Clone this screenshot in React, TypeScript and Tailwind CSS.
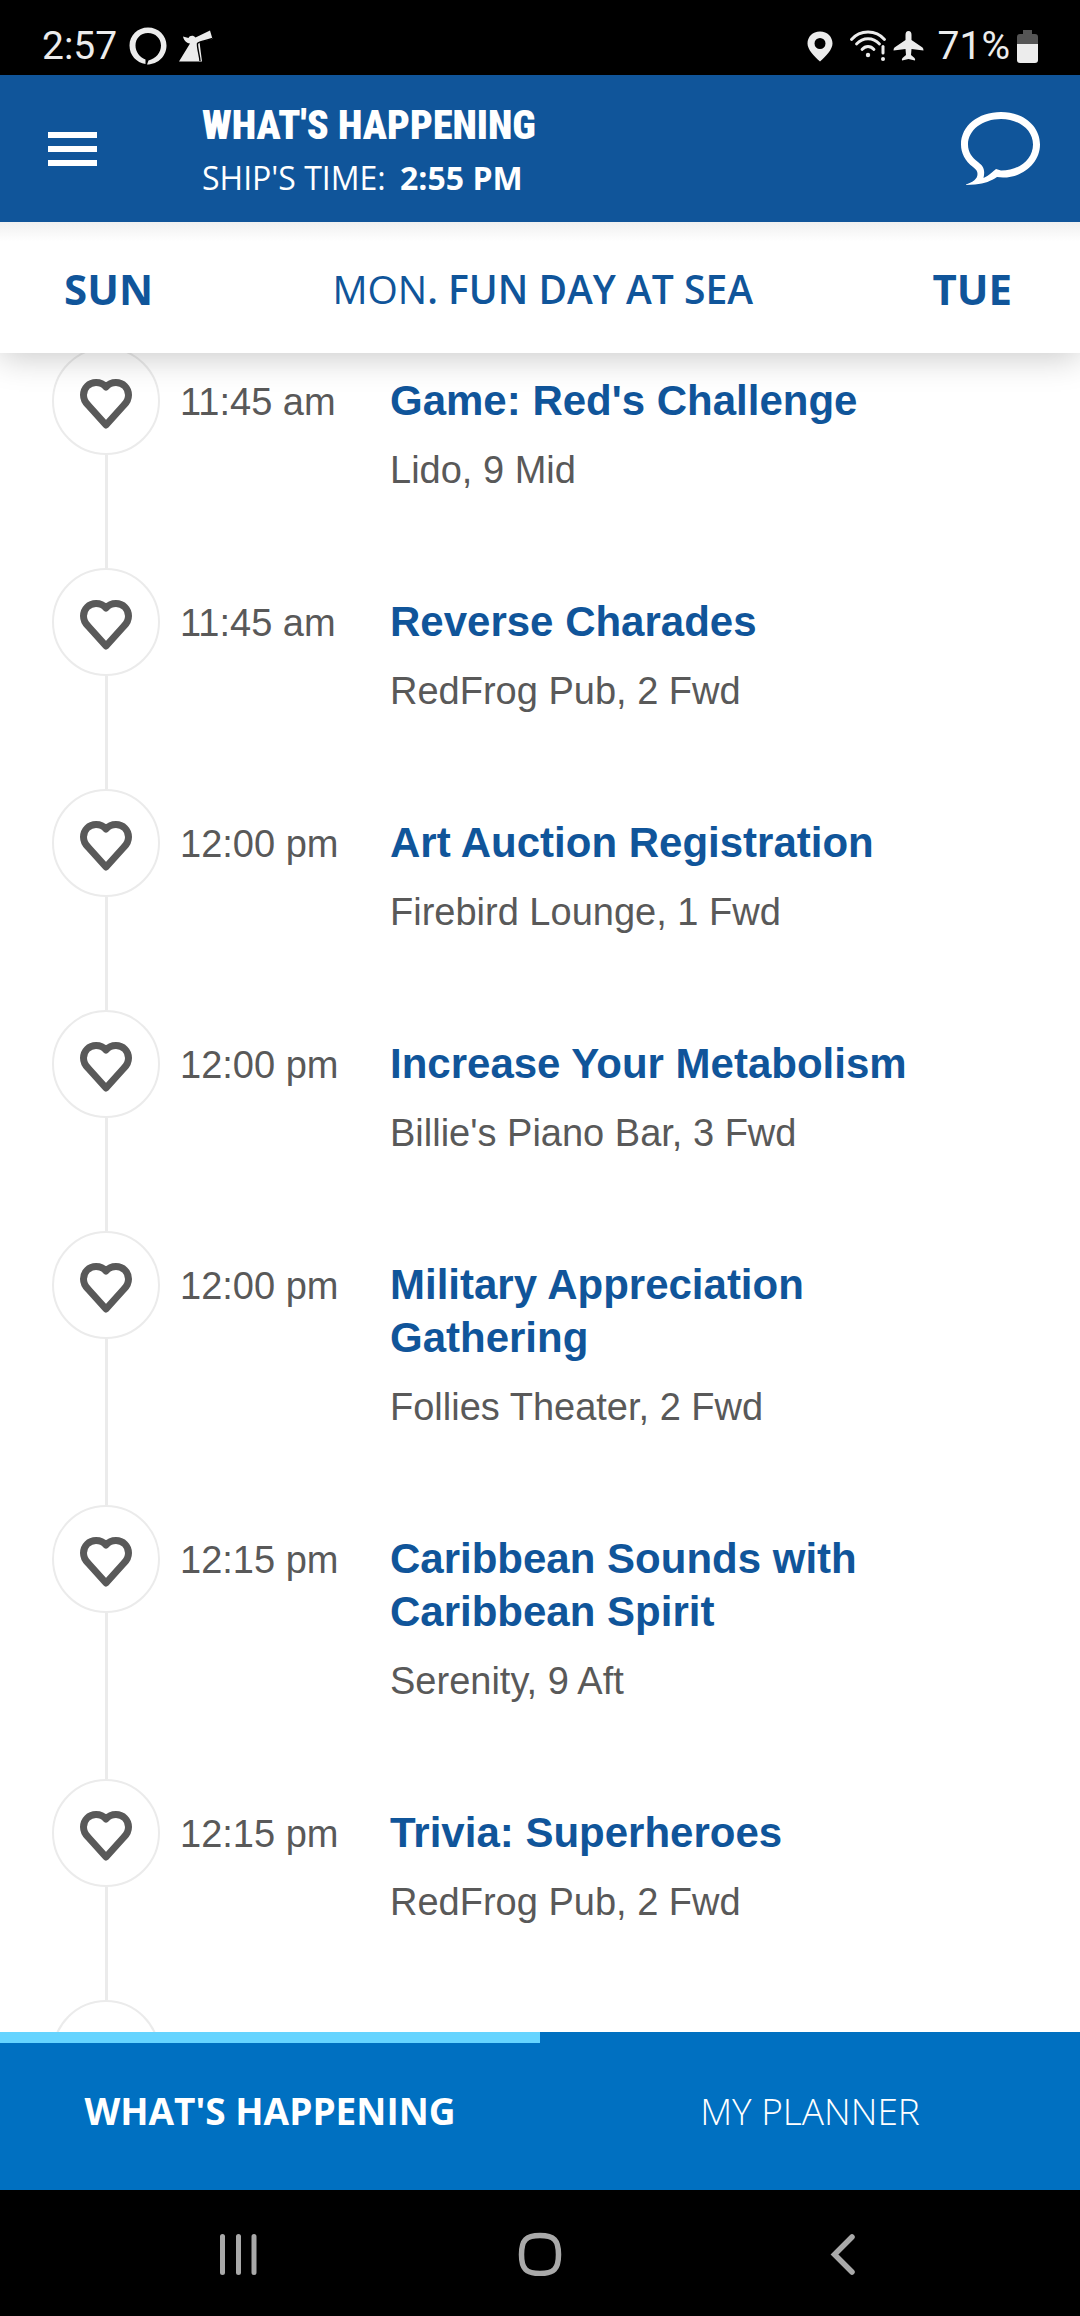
import { useState } from 'react';

type ShipEvent = {
  id: number;
  time: string;
  title: string;
  location: string;
};

const EVENTS: ShipEvent[] = [
  { id: 1, time: '11:45 am', title: "Game: Red's Challenge", location: 'Lido, 9 Mid' },
  { id: 2, time: '11:45 am', title: 'Reverse Charades', location: 'RedFrog Pub, 2 Fwd' },
  { id: 3, time: '12:00 pm', title: 'Art Auction Registration', location: 'Firebird Lounge, 1 Fwd' },
  { id: 4, time: '12:00 pm', title: 'Increase Your Metabolism', location: "Billie's Piano Bar, 3 Fwd" },
  { id: 5, time: '12:00 pm', title: 'Military Appreciation Gathering', location: 'Follies Theater, 2 Fwd' },
  { id: 6, time: '12:15 pm', title: 'Caribbean Sounds with Caribbean Spirit', location: 'Serenity, 9 Aft' },
  { id: 7, time: '12:15 pm', title: 'Trivia: Superheroes', location: 'RedFrog Pub, 2 Fwd' },
];

function StatusBar() {
  return (
    <div className="flex h-[75px] shrink-0 items-end justify-between bg-black px-[42px] pb-[6px] font-['Roboto',sans-serif] text-[39px] leading-[46px] text-[#ececec]">
      <div className="flex items-center gap-3">
        <span>2:57</span>
        <svg viewBox="0 0 38 38" className="h-[38px] w-[38px]" fill="none">
          <path
            fillRule="evenodd"
            fill="#ececec"
            d="M19 0.500C29.500 .5 37.500 8.500 37.500 18.500 37.500 28.500 29.500 37.500 18 37.500L19.500 33.500C27 31.500 32 25.500 32 18.500 32 11.500 26.500 6 19 6S6.500 11.500 6.500 18.500C6.500 24.500 10.500 30.500 16.500 32.500L16.500 37C7.500 35.500.5 28.500.5 18.500.5 8.500 8.500.5 19 .5Z"
          />
        </svg>
        <svg viewBox="0 0 34 32" className="h-8 w-[34px]" fill="#ececec">
          <path d="M0 31.500 11 13.500C7 13 5 10.500 4 6.500L9.500 8c1-2.500 5-3 7-.5L31 .5 33.500 9 20.500 12 23 31.500Z" />
          <path d="M21 31c-.5-6-3-14-2.500-17.500 2-2.500 8-2.500 15-5" fill="none" stroke="#000" strokeWidth="1.400" />
        </svg>
      </div>
      <div className="flex items-center gap-[7px]">
        <svg viewBox="0 0 26 31" className="mr-[10px] h-[31px] w-[26px]" fill="#ececec">
          <path
            fillRule="evenodd"
            d="M13 .5C5.500.5.5 6 .5 12.500.5 18.500 7 25 13 30.500 19 25 25.500 18.500 25.500 12.500 25.500 6 20.500.5 13 .5Zm0 6.500a5.500 5.500 0 1 1 0 11 5.500 5.500 0 0 1 0-11Z"
          />
        </svg>
        <svg viewBox="0 0 36 32" className="h-8 w-9" fill="none" stroke="#ececec" strokeWidth="2.800" strokeLinecap="round">
          <path d="M1.500 9.500C10-.5 26-.5 34.500 9.500" />
          <path d="M6.500 14C13 7 23 7 29.500 14" />
          <path d="M12 19.500c3.500-4 8.500-4 12 0" />
          <circle cx="18" cy="25" r="2.200" fill="#ececec" stroke="none" />
          <path d="M33 16.500V23" strokeWidth="3" />
          <circle cx="33" cy="29" r="2" fill="#ececec" stroke="none" />
        </svg>
        <svg viewBox="0 0 31 30" className="h-[30px] w-[31px]" fill="#ececec">
          <path d="M15.500 0c-2 0-3 1.500-3 4v5L1.500 16.500Q.5 17.500.5 19.500L12.500 18 13 24l-3.500 3Q8.500 28 9 29.500L15.500 28 22 29.500Q22.500 28 21.500 27L18 24l.5-6L30.500 19.500Q30.500 17.500 29.500 16.500L18.500 9V4c0-2.500-1-4-3-4Z" />
        </svg>
        <span className="ml-[7px]">71%</span>
        <svg viewBox="0 0 21 33" className="h-[33px] w-[21px]">
          <path d="M6 0h9v4h3q3 0 3 3v7H0V7q0-3 3-3h3Z" fill="#555" />
          <path d="M0 14h21v16q0 3-3 3H3q-3 0-3-3Z" fill="#ececec" />
        </svg>
      </div>
    </div>
  );
}

function Header() {
  return (
    <header className="relative z-20 flex h-[147px] shrink-0 items-center bg-[#10559a] pr-10 pl-12 text-white">
      <button type="button" aria-label="Open menu" className="flex w-[49px] flex-col gap-2">
        <span className="h-[6px] bg-white" />
        <span className="h-[6px] bg-white" />
        <span className="h-[6px] bg-white" />
      </button>
      <div className="ml-[105px] flex-1 pt-[6px]">
        <h1 className="font-['Roboto_Condensed','Roboto',sans-serif] text-[40px] leading-[52px] font-black">
          WHAT'S HAPPENING
        </h1>
        <p className="text-[32px] leading-[52px]">
          SHIP'S TIME: <strong className="ml-[6px] font-bold">2:55 PM</strong>
        </p>
      </div>
      <button type="button" aria-label="Open chat">
        <svg viewBox="0 0 79 74" className="h-[74px] w-[79px]" fill="#fff">
          <path
            fillRule="evenodd"
            d="M40 0C62 0 79 14 79 32.500 79 51 62 65.500 42 65.500L36 65C30 69 24 71.500 14 72.500L5 73v-.5C12 70 16.500 67 16.500 62 16.500 59 15 57.500 12 55 4 49 0 41 0 32.500 0 14 17 0 40 0ZM40 7C21.500 7 7 18 7 32.500 7 40 11 45.500 17 50 22 54 24.500 57 22.500 66 28 64 32 59 35 57L40 58.500C59 58.500 72 47 72 32.500 72 18 58 7 40 7Z"
          />
        </svg>
      </button>
    </header>
  );
}

function DayPicker() {
  return (
    <nav className="relative z-10 flex h-[131px] shrink-0 items-center justify-between bg-linear-to-b from-[#f0f0f0] via-white via-15% to-white pt-[2px] pr-[68px] pl-16 leading-[54px] text-[#10559a] shadow-[0_4px_32px_rgba(0,0,0,0.22)]">
      <button type="button" className="text-[42px] font-bold">
        SUN
      </button>
      <button type="button" aria-current="date" className="text-[39px] font-semibold">
        <span className="font-normal">MON</span>. FUN DAY AT SEA
      </button>
      <button type="button" className="text-[42px] font-bold">
        TUE
      </button>
    </nav>
  );
}

function FavoriteButton({ label }: { label: string }) {
  return (
    <button
      type="button"
      aria-label={label}
      className="flex h-[108px] w-[108px] shrink-0 items-center justify-center rounded-full border-2 border-[#ebebeb] bg-white"
    >
      <svg viewBox="26 30 56 54" className="mt-[6px] h-[54px] w-14" fill="none" stroke="#595959" strokeWidth="7" strokeLinejoin="round">
        <path d="M54 40C51.500 37 48 35.500 44 35.500 37 35.500 31.500 41 31.500 48 31.500 52 33 55 36 58L54 78 72 58C75 55 76.500 52 76.500 48 76.500 41 71 35.500 64 35.500 60 35.500 56.500 37 54 40Z" />
      </svg>
    </button>
  );
}

function EventRow({ event }: { event: ShipEvent }) {
  return (
    <li className="flex">
      <div className="flex flex-col items-center">
        <FavoriteButton label={`Add ${event.title} to my planner`} />
        <div className="w-[3px] flex-1 bg-[#ebebeb]" />
      </div>
      <div className="flex flex-1 items-baseline pt-[27px] pb-[76px] pl-5 text-[38px] leading-[44px] text-[#595959]">
        <time className="w-[210px] shrink-0">{event.time}</time>
        <div className="max-w-[540px] flex-1">
          <h2 className="text-[42px] leading-[53px] font-bold text-[#10559a]">{event.title}</h2>
          <p className="mt-[21px]">{event.location}</p>
        </div>
      </div>
    </li>
  );
}

function BottomTabs() {
  const [tab, setTab] = useState<'happening' | 'planner'>('happening');

  return (
    <nav className="grid h-[158px] shrink-0 grid-cols-2 bg-[#0070c1] text-[37px] leading-[48px] text-white">
      <button
        type="button"
        onClick={() => setTab('happening')}
        className={`border-t-[11px] pb-[11px] ${tab === 'happening' ? 'border-[#66d4ff] font-bold' : 'border-transparent font-light'}`}
      >
        WHAT'S HAPPENING
      </button>
      <button
        type="button"
        onClick={() => setTab('planner')}
        className={`border-t-[11px] pb-[11px] ${tab === 'planner' ? 'border-[#66d4ff] font-bold' : 'border-transparent font-light'}`}
      >
        MY PLANNER
      </button>
    </nav>
  );
}

function SystemNav() {
  return (
    <div className="flex h-[126px] shrink-0 items-center justify-between bg-black px-[216px] pt-[2px]">
      <button type="button" aria-label="Recent apps">
        <svg viewBox="0 0 44 44" className="h-11 w-11" stroke="#a9a9a9" strokeWidth="5" strokeLinecap="round">
          <path d="M6.500 4.500v36M22.500 4.500v36M38 4.500v36" />
        </svg>
      </button>
      <button type="button" aria-label="Home">
        <svg viewBox="0 0 44 44" className="h-11 w-11" fill="none" stroke="#a9a9a9" strokeWidth="5.500">
          <path d="M22 3.500C36 3.500 40.500 8 40.500 22.500S36 41.500 22 41.500 3.500 37 3.500 22.500 8 3.500 22 3.500Z" />
        </svg>
      </button>
      <button type="button" aria-label="Back">
        <svg viewBox="0 0 44 44" className="h-11 w-11" fill="none" stroke="#a9a9a9" strokeWidth="5.500" strokeLinecap="round">
          <path d="M32 5 14.500 22.500 32 40" />
        </svg>
      </button>
    </div>
  );
}

export default function App() {
  return (
    <div className="flex h-screen flex-col bg-white font-['Open_Sans',sans-serif]">
      <StatusBar />
      <Header />
      <DayPicker />
      <main className="min-h-0 flex-1 overflow-hidden pl-[52px] font-['Liberation_Sans',Arial,sans-serif]">
        <ul className="-mt-[6px]">
          {EVENTS.map((event) => (
            <EventRow key={event.id} event={event} />
          ))}
          <li>
            <FavoriteButton label="Add to my planner" />
          </li>
        </ul>
      </main>
      <BottomTabs />
      <SystemNav />
    </div>
  );
}
